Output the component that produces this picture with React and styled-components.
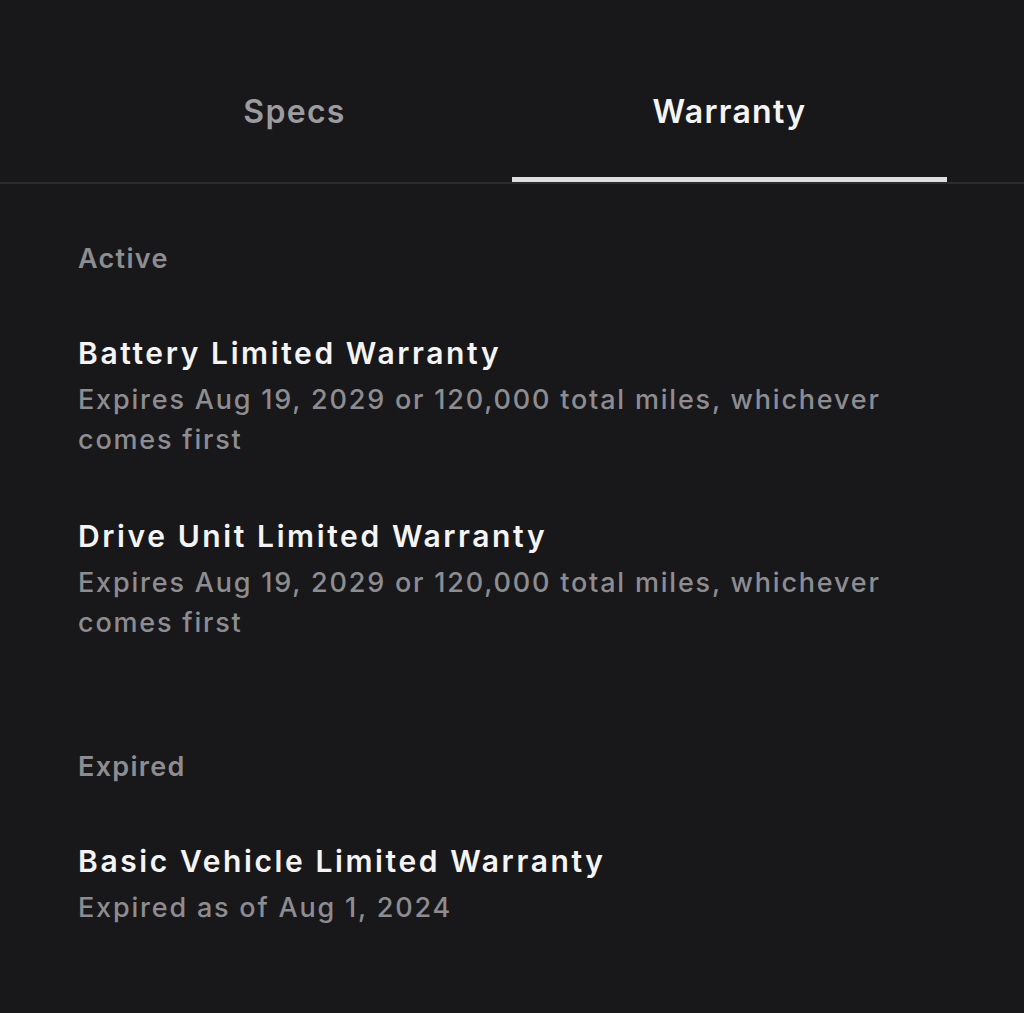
import React from "react";
import styled, { createGlobalStyle } from "styled-components";

const GlobalStyle = createGlobalStyle`
  html, body {
    margin: 0;
    padding: 0;
    background: #18181b;
  }
  body {
    font-family: Inter, "Noto Sans", sans-serif;
    -webkit-font-smoothing: antialiased;
  }
`;

const warranties = {
  active: [
    {
      title: "Battery Limited Warranty",
      detail: "Expires Aug 19, 2029 or 120,000 total miles, whichever comes first",
    },
    {
      title: "Drive Unit Limited Warranty",
      detail: "Expires Aug 19, 2029 or 120,000 total miles, whichever comes first",
    },
  ],
  expired: [
    {
      title: "Basic Vehicle Limited Warranty",
      detail: "Expired as of Aug 1, 2024",
    },
  ],
};

const App = () => {
  return (
    <Page>
      <GlobalStyle />
      <TabBar>
        <Tab>Specs</Tab>
        <Tab active>Warranty</Tab>
      </TabBar>
      <Content>
        <Section>
          <SectionLabel>Active</SectionLabel>
          {warranties.active.map((w) => (
            <Item key={w.title}>
              <ItemTitle>{w.title}</ItemTitle>
              <ItemDetail>{w.detail}</ItemDetail>
            </Item>
          ))}
        </Section>
        <Section expired>
          <SectionLabel>Expired</SectionLabel>
          {warranties.expired.map((w) => (
            <Item key={w.title}>
              <ItemTitle>{w.title}</ItemTitle>
              <ItemDetail>{w.detail}</ItemDetail>
            </Item>
          ))}
        </Section>
      </Content>
    </Page>
  );
};

export default App;

const Page = styled.div`
  min-height: 1013px;
  background: #18181b;
  color: #f4f4f5;
`;

const TabBar = styled.div`
  display: flex;
  padding: 0 77px;
  border-bottom: 2px solid #2c2c30;
`;

const Tab = styled.div`
  flex: 1;
  box-sizing: border-box;
  height: 182px;
  padding-top: 88px;
  text-align: center;
  font-size: 32px;
  line-height: 48px;
  font-weight: 600;
  letter-spacing: 1.3px;
  color: ${(p) => (p.active ? "#f4f4f5" : "#9c9ca0")};
  border-bottom: 5px solid ${(p) => (p.active ? "#dedede" : "transparent")};
`;

const Content = styled.div`
  padding: 57px 78px 0 78px;
`;

const Section = styled.div`
  display: flex;
  flex-direction: column;
  gap: 56px;
  margin-top: ${(p) => (p.expired ? "106px" : "0")};
`;

const SectionLabel = styled.div`
  font-size: 27px;
  line-height: 36px;
  font-weight: 600;
  letter-spacing: 1.3px;
  color: #8d8d91;
`;

const Item = styled.div`
  display: flex;
  flex-direction: column;
  gap: 7px;
`;

const ItemTitle = styled.div`
  font-size: 30px;
  line-height: 40px;
  font-weight: 600;
  letter-spacing: 2.6px;
  color: #f4f4f5;
`;

const ItemDetail = styled.div`
  font-size: 27px;
  line-height: 40px;
  font-weight: 500;
  letter-spacing: 1.8px;
  color: #8d8d91;
`;
